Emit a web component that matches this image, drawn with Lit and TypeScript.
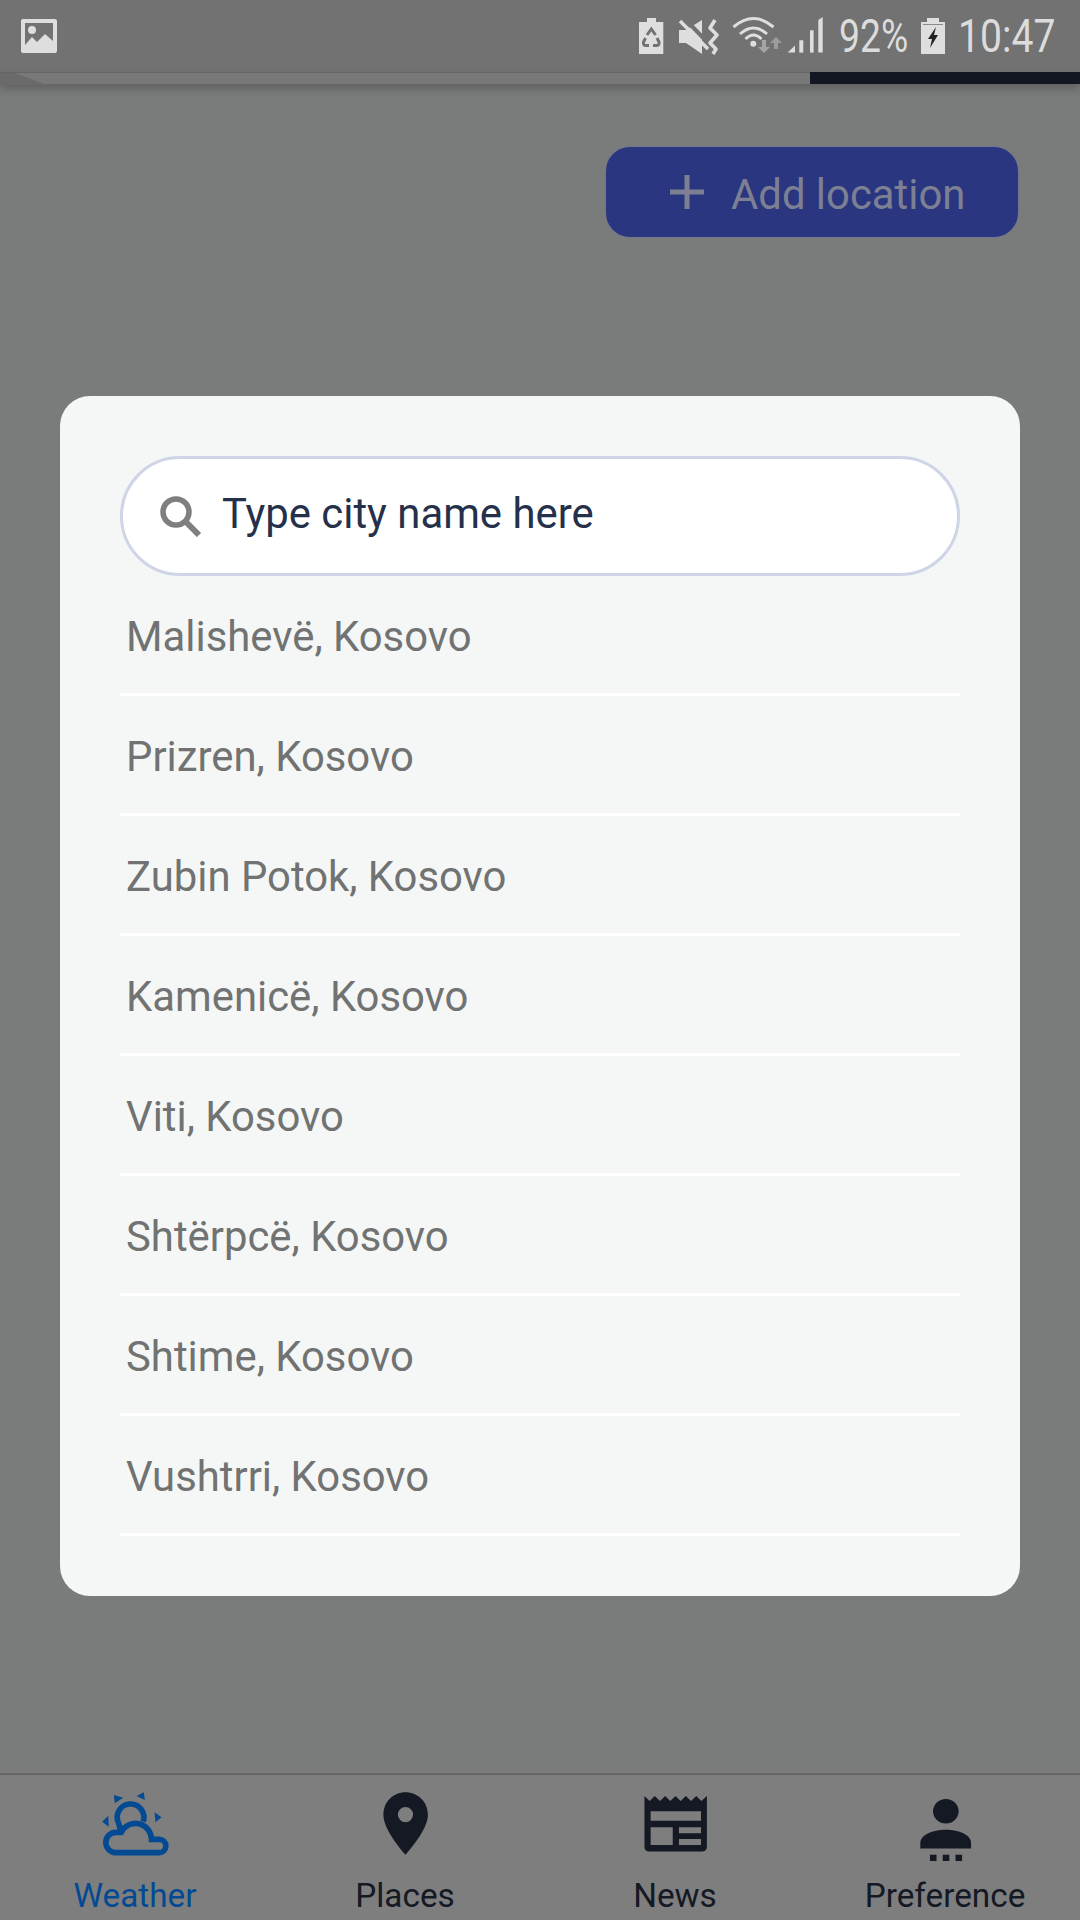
import { LitElement, css, html } from "lit";
import { customElement } from "lit/decorators.js";

const CITIES = [
  "Malishevë, Kosovo",
  "Prizren, Kosovo",
  "Zubin Potok, Kosovo",
  "Kamenicë, Kosovo",
  "Viti, Kosovo",
  "Shtërpcë, Kosovo",
  "Shtime, Kosovo",
  "Vushtrri, Kosovo",
];

const weatherIcon = html`<svg class="tab-icon" viewBox="31.5 15 207 219">
  <g fill="none" stroke="#034a93" stroke-width="17">
    <path d="M75 203H205A20 20 0 0 0 207 163H183A48 48 0 0 0 92 142H78A30 30 0 0 0 75 203Z" />
    <path d="M90 135L85 116A40 40 0 1 1 158 110" />
  </g>
  <g fill="#034a93">
    <path d="M70 30L98 38L73 55Z" />
    <path d="M138 33L160 22L163 45Z" />
    <path d="M192 82L213 97L195 112Z" />
    <path d="M35 110L53 92L55 125Z" />
  </g>
</svg>`;

const placeIcon = html`<svg class="tab-icon" viewBox="1077 150 200 220" preserveAspectRatio="none">
  <path
    fill="#141924"
    fill-rule="evenodd"
    d="M1177 157C1141 157 1113 186 1113 225C1113 262 1150 312 1177 345C1204 312 1242 262 1242 225C1242 186 1213 157 1177 157ZM1177 201A22 23 0 1 1 1177 247A22 23 0 1 1 1177 201Z"
  />
</svg>`;

const newsIcon = html`<svg class="tab-icon" viewBox="292 150 200 220" preserveAspectRatio="none">
  <path
    fill="#141924"
    fill-rule="evenodd"
    d="M302 168L317 183L332 168L347 183L362 168L377 183L392 168L407 183L422 168L437 183L452 168L467 183L483 168V320Q483 335 468 335H317Q302 335 302 320ZM320 214V243H466V214ZM320 262V316H384V262ZM402 262V280H466V262ZM402 298V316H466V298Z"
  />
</svg>`;

const prefIcon = html`<svg class="tab-icon" viewBox="1077 150 200 220" preserveAspectRatio="none">
  <g fill="#141924">
    <ellipse cx="1178" cy="214" rx="37" ry="37" />
    <path d="M1104 326V310C1104 285 1140 270 1178 270C1216 270 1251 285 1251 310V326Z" />
    <rect x="1132" y="345" width="19" height="19" />
    <rect x="1169" y="345" width="19" height="19" />
    <rect x="1206" y="345" width="19" height="19" />
  </g>
</svg>`;

const TABS = [
  { label: "Weather", icon: weatherIcon, active: true },
  { label: "Places", icon: placeIcon, active: false },
  { label: "News", icon: newsIcon, active: false },
  { label: "Preference", icon: prefIcon, active: false },
];

@customElement("app-root")
export class AppRoot extends LitElement {
  static styles = css`
    :host {
      display: flex;
      flex-direction: column;
      width: 1080px;
      height: 1920px;
      overflow: hidden;
      background: #7a7c7b;
      font-family: Roboto, "Liberation Sans", sans-serif;
    }
    .status {
      display: flex;
      align-items: center;
      height: 72px;
      flex: none;
      box-sizing: border-box;
      padding-left: 21px;
      background: #727272;
      color: #dcdcdc;
    }
    .status-photo {
      width: 36px;
      height: 34px;
      margin-top: -1px;
    }
    .status-icons {
      width: 190px;
      height: 40px;
      margin-left: 579px;
    }
    .status-text {
      font-size: 46px;
      line-height: 40px;
      white-space: nowrap;
      transform-origin: left center;
    }
    .percent {
      width: 69px;
      margin-left: 13px;
      transform: scaleX(0.81);
    }
    .status-batt {
      width: 24px;
      height: 36px;
      margin-left: 13px;
    }
    .clock {
      width: 97px;
      margin-left: 13px;
      transform: scaleX(0.85);
    }
    .band {
      display: flex;
      justify-content: space-between;
      flex: none;
      height: 12px;
      background: #787878;
      border-top: 1px solid #666;
      box-sizing: border-box;
      box-shadow: 0 5px 9px rgba(0, 0, 0, 0.22);
    }
    .band-wedge {
      width: 48px;
      height: 12px;
    }
    .band-dark {
      width: 270px;
      margin-top: -1px;
      height: 12px;
      background: #131722;
    }
    main {
      flex: 1;
      display: flex;
      flex-direction: column;
      min-height: 0;
    }
    .add {
      display: flex;
      align-items: center;
      align-self: flex-end;
      box-sizing: border-box;
      width: 412px;
      height: 90px;
      margin: 63px 62px 0 0;
      padding-left: 63px;
      gap: 26px;
      border-radius: 24px;
      background: #2a3680;
      color: #7d8093;
      font-size: 41.85px;
      box-shadow: 0 0 0 1px #74778a;
    }
    .add span {
      padding-top: 5px;
    }
    .add svg {
      width: 36px;
      height: 36px;
    }
    .modal {
      box-sizing: border-box;
      width: 960px;
      height: 1200px;
      margin: 159px 0 0 60px;
      padding: 60px;
      background: #f5f7f6;
      border-radius: 30px;
    }
    .search {
      display: flex;
      align-items: center;
      box-sizing: border-box;
      height: 120px;
      padding-left: 36px;
      gap: 20px;
      background: #fff;
      border: 3px solid #cdd5e6;
      border-radius: 60px;
      color: #25304a;
      font-size: 41.85px;
    }
    .search span {
      padding-bottom: 6px;
    }
    .search svg {
      width: 43px;
      height: 42px;
    }
    .city {
      display: flex;
      align-items: center;
      box-sizing: border-box;
      height: 120px;
      padding: 3px 0 0 6px;
      border-bottom: 3px solid #fff;
      color: #717272;
      font-size: 41.85px;
    }
    nav {
      display: grid;
      grid-template-columns: repeat(4, 270px);
      flex: none;
      box-sizing: border-box;
      height: 147px;
      background: #7e7e7e;
      border-top: 2px solid #666;
    }
    .tab {
      display: flex;
      flex-direction: column;
      align-items: center;
      padding-top: 15px;
      color: #141924;
      font-size: 33.3px;
      line-height: 40px;
    }
    .tab.active {
      color: #034a93;
    }
    .tab-icon {
      width: 69px;
      height: 73px;
      margin-bottom: 13px;
    }
  `;

  render() {
    return html`
      <div class="status">
        <svg class="status-photo" viewBox="0 0 36 34">
          <path
            fill="#dedede"
            fill-rule="evenodd"
            d="M2 0H34Q36 0 36 2V32Q36 34 34 34H2Q0 34 0 32V2Q0 0 2 0ZM4 4V26L11 18L16 23L24 15L32 22V4ZM11 7A4 4 0 1 1 11 15A4 4 0 1 1 11 7Z"
          />
        </svg>
        <svg class="status-icons" viewBox="0 0 190 40">
          <!-- battery with recycle mark -->
          <path fill="#dedede" d="M11 2H20V6H27.3V38H3V6H11Z" />
          <g fill="none" stroke="#727272" stroke-width="3">
            <path d="M11 19L15.3 13L19.6 19" />
            <path d="M9.5 22L7.5 26Q7 29.5 10 29.5H13" />
            <path d="M21 22L23 26Q23.5 29.5 20.5 29.5H17" />
          </g>
          <!-- muted speaker and vibrate wave -->
          <path fill="#dedede" d="M43 14H50L66 4V38L50 27H43Z" />
          <path fill="none" stroke="#727272" stroke-width="4" d="M48 2L76 31" />
          <path fill="none" stroke="#dedede" stroke-width="3.5" d="M44 5L72 33" />
          <path
            fill="none"
            stroke="#dedede"
            stroke-width="3.6"
            stroke-linejoin="round"
            d="M79 4L74 12L81 19L74 27L80 33L77 38"
          />
          <!-- wifi -->
          <g fill="none" stroke="#dedede" stroke-width="3">
            <path d="M97.5 11Q117.5 -6 137.5 11" />
            <path d="M104 18Q117.5 6 131 18" />
            <path d="M109.5 23Q117.5 15 125.5 23" />
          </g>
          <circle cx="117.3" cy="27.7" r="3" fill="#dedede" />
          <path fill="#a5a5a5" d="M126 24H130V31H134L128 37L122 31H126Z" />
          <path fill="#9c9c9c" d="M140 21L146 27H142V33H138V27H134Z" />
          <!-- signal -->
          <g fill="#dedede">
            <path d="M151.7 36.6L159 29.5V36.6Z" />
            <rect x="163.3" y="24.3" width="4" height="12.3" />
            <rect x="174" y="14.3" width="3.6" height="22.3" />
            <path d="M182.3 4L186.7 1V36.6H182.3Z" />
          </g>
        </svg>
        <span class="status-text percent">92%</span>
        <svg class="status-batt" viewBox="0 0 24 36">
          <path fill="#dedede" d="M6 0H18V4H24V36H0V4H6Z" />
          <rect x="2" y="6" width="20" height="1" fill="#8a8a8a" />
          <path fill="#222" d="M15 9L7 21H11L9 30L17 17H13Z" />
        </svg>
        <span class="status-text clock">10:47</span>
      </div>
      <div class="band">
        <svg class="band-wedge" viewBox="0 0 48 12">
          <path fill="#6a6a6a" d="M0 0H15L47 12H0Z" />
        </svg>
        <div class="band-dark"></div>
      </div>
      <main>
        <div class="add">
          <svg viewBox="0 0 36 36">
            <path fill="#7d8093" d="M15.5 1H20.5V15.5H35V20.5H20.5V35H15.5V20.5H1V15.5H15.5Z" />
          </svg>
          <span>Add location</span>
        </div>
        <div class="modal">
          <div class="search">
            <svg viewBox="0 0 43 42">
              <circle cx="17" cy="17" r="13" fill="none" stroke="#7f7f7f" stroke-width="5.5" />
              <path d="M27 27L40 40" fill="none" stroke="#7f7f7f" stroke-width="6" />
            </svg>
            <span>Type city name here</span>
          </div>
          ${CITIES.map((city) => html`<div class="city">${city}</div>`)}
        </div>
      </main>
      <nav>
        ${TABS.map(
          (tab) => html`
            <div class="tab ${tab.active ? "active" : ""}">
              ${tab.icon}
              <span>${tab.label}</span>
            </div>
          `
        )}
      </nav>
    `;
  }
}
